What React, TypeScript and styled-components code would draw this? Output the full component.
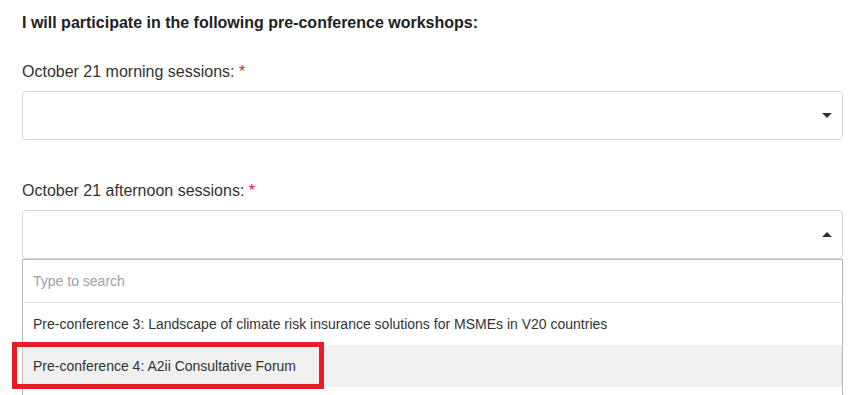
import React, { ReactElement } from "react";
import styled, { createGlobalStyle } from "styled-components";

const Global = createGlobalStyle`
  body {
    margin: 0;
    background: #ffffff;
    font-family: "Liberation Sans", Arial, sans-serif;
    color: #333333;
  }
`;

export default function App(): ReactElement {
  return (
    <>
      <Global />
      <Page>
        <Title>I will participate in the following pre-conference workshops:</Title>

        <Label>
          October 21 morning sessions: <Req>*</Req>
        </Label>
        <Select>
          <Caret up={false} />
        </Select>

        <Label>
          October 21 afternoon sessions: <Req>*</Req>
        </Label>
        <Select open>
          <Caret up />
        </Select>
        <Menu>
          <Search>Type to search</Search>
          <Option>
            Pre-conference 3: Landscape of climate risk insurance solutions for MSMEs in V20 countries
          </Option>
          <Option active>
            Pre-conference 4: A2ii Consultative Forum
            <Highlight />
          </Option>
        </Menu>
      </Page>
    </>
  );
}

const Page = styled.div`
  width: 821px;
  padding: 13px 0 0 22px;
  display: flex;
  flex-direction: column;
`;

const Title = styled.div`
  font-weight: bold;
  font-size: 16px;
  line-height: 20px;
  color: #222;
  margin-bottom: 29px;
`;

const Label = styled.div`
  font-size: 16px;
  line-height: 20px;
  color: #333;
  margin-bottom: 9px;
`;

const Req = styled.span`
  color: #e5202a;
`;

const Select = styled.div<{ open?: boolean }>`
  position: relative;
  height: 47px;
  border: 1px solid #d3d6db;
  border-radius: 4px;
  margin-bottom: ${(p) => (p.open ? "0" : "41px")};
  display: flex;
  align-items: center;
  justify-content: flex-end;
  padding-right: 10px;
`;

const Caret = styled.span<{ up: boolean }>`
  width: 0;
  height: 0;
  border-left: 5px solid transparent;
  border-right: 5px solid transparent;
  ${(p) => (p.up ? "border-bottom: 5px solid #333;" : "border-top: 5px solid #333;")}
`;

const Menu = styled.div`
  border: 1px solid #b8b8b8;
  border-bottom: none;
  height: 140px;
`;

const Search = styled.div`
  height: 42px;
  border-bottom: 1px solid #dcdcdc;
  display: flex;
  align-items: center;
  padding-left: 10px;
  font-size: 14px;
  color: #9aa1a9;
`;

const Option = styled.div<{ active?: boolean }>`
  position: relative;
  height: 42px;
  display: flex;
  align-items: center;
  padding-left: 10px;
  font-size: 14px;
  color: #333;
  background: ${(p) => (p.active ? "#f0f0f0" : "#fff")};
`;

const Highlight = styled.span`
  position: absolute;
  left: -11px;
  top: -3px;
  width: 302px;
  height: 37px;
  border: 5px solid #e81c24;
`;
